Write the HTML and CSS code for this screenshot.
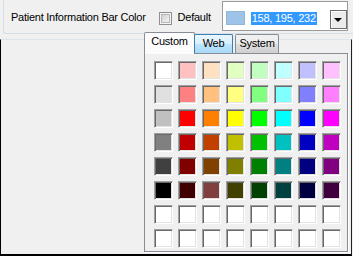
FILE: index.html
```html
<!DOCTYPE html>
<html>
<head>
<meta charset="utf-8">
<link rel="stylesheet" href="styles.css">
</head>
<body>
<div class="window">
  <div class="group">
    <div class="row">
      <span class="label">Patient Information Bar Color</span>
      <span class="check"></span>
      <span class="check-label">Default</span>
      <div class="combo">
        <span class="combo-swatch"></span>
        <span class="combo-text">158, 195, 232</span>
        <span class="combo-button"><span class="arrow"></span></span>
      </div>
    </div>
  </div>
  <div class="panel"></div>

  <div class="popup">
    <div class="tabs">
      <span class="tab active">Custom</span>
      <span class="tab hover">Web</span>
      <span class="tab system">System</span>
    </div>
    <div class="page">
      <div class="grid">
        <span class="sw" style="background:#ffffff"></span>
        <span class="sw" style="background:#ffc0c0"></span>
        <span class="sw" style="background:#ffe0c0"></span>
        <span class="sw" style="background:#e0ffc0"></span>
        <span class="sw" style="background:#c0ffc0"></span>
        <span class="sw" style="background:#c0ffff"></span>
        <span class="sw" style="background:#c0c0ff"></span>
        <span class="sw" style="background:#ffc0ff"></span>

        <span class="sw" style="background:#e0e0e0"></span>
        <span class="sw" style="background:#ff8080"></span>
        <span class="sw" style="background:#ffc080"></span>
        <span class="sw" style="background:#ffff80"></span>
        <span class="sw" style="background:#80ff80"></span>
        <span class="sw" style="background:#80ffff"></span>
        <span class="sw" style="background:#8080ff"></span>
        <span class="sw" style="background:#ff80ff"></span>

        <span class="sw" style="background:#c0c0c0"></span>
        <span class="sw" style="background:#ff0000"></span>
        <span class="sw" style="background:#ff8000"></span>
        <span class="sw" style="background:#ffff00"></span>
        <span class="sw" style="background:#00ff00"></span>
        <span class="sw" style="background:#00ffff"></span>
        <span class="sw" style="background:#0000ff"></span>
        <span class="sw" style="background:#ff00ff"></span>

        <span class="sw" style="background:#808080"></span>
        <span class="sw" style="background:#c00000"></span>
        <span class="sw" style="background:#c04000"></span>
        <span class="sw" style="background:#c0c000"></span>
        <span class="sw" style="background:#00c000"></span>
        <span class="sw" style="background:#00c0c0"></span>
        <span class="sw" style="background:#0000c0"></span>
        <span class="sw" style="background:#c000c0"></span>

        <span class="sw" style="background:#404040"></span>
        <span class="sw" style="background:#800000"></span>
        <span class="sw" style="background:#804000"></span>
        <span class="sw" style="background:#808000"></span>
        <span class="sw" style="background:#008000"></span>
        <span class="sw" style="background:#008080"></span>
        <span class="sw" style="background:#000080"></span>
        <span class="sw" style="background:#800080"></span>

        <span class="sw" style="background:#000000"></span>
        <span class="sw" style="background:#400000"></span>
        <span class="sw" style="background:#804040"></span>
        <span class="sw" style="background:#404000"></span>
        <span class="sw" style="background:#004000"></span>
        <span class="sw" style="background:#004040"></span>
        <span class="sw" style="background:#000040"></span>
        <span class="sw" style="background:#400040"></span>

        <span class="sw"></span><span class="sw"></span><span class="sw"></span><span class="sw"></span>
        <span class="sw"></span><span class="sw"></span><span class="sw"></span><span class="sw"></span>
        <span class="sw"></span><span class="sw"></span><span class="sw"></span><span class="sw"></span>
        <span class="sw"></span><span class="sw"></span><span class="sw"></span><span class="sw"></span>
      </div>
    </div>
  </div>
</div>
</body>
</html>
```

FILE: styles.css
```css
html, body {
  margin: 0;
  padding: 0;
}
body {
  width: 353px;
  height: 256px;
  overflow: hidden;
  background: #f0f0f0;
  font-family: "Liberation Sans", Arial, sans-serif;
  font-size: 11px;
  letter-spacing: -0.25px;
  color: #000;
}
.window {
  position: relative;
  width: 353px;
  height: 256px;
}
.group {
  box-sizing: border-box;
  margin-left: 3px;
  width: 350px;
  height: 34px;
  border-left: 1px solid #d5dfe5;
  border-bottom: 1px solid #d5dfe5;
  border-bottom-left-radius: 3px;
}
.row {
  display: flex;
  align-items: flex-start;
  padding-left: 7px;
}
.label {
  margin-top: 11px;
  line-height: 13px;
  white-space: nowrap;
}
.check {
  box-sizing: border-box;
  width: 13px;
  height: 13px;
  margin-top: 12px;
  margin-left: 13px;
  border: 1px solid #8e8f8f;
  background: linear-gradient(135deg, #c9c9c9 0%, #ececec 70%, #f6f6f6 100%);
  box-shadow: inset 0 0 0 1px #f4f4f4, inset 0 0 0 2px #b8b8b8;
}
.check-label {
  margin-top: 11px;
  margin-left: 6px;
  line-height: 13px;
}
.combo {
  box-sizing: border-box;
  display: flex;
  align-items: flex-start;
  width: 126px;
  height: 30px;
  margin-top: 1px;
  margin-left: 11px;
  border: 1px solid #9a9a9a;
  background: #fff;
}
.combo-swatch {
  box-sizing: border-box;
  width: 19px;
  height: 14px;
  margin-top: 9px;
  margin-left: 3px;
  background: #9ec3e8;
  border: 1px solid #95b6d8;
}
.combo-text {
  margin-top: 10px;
  margin-left: 6px;
  padding: 0 1px;
  line-height: 13px;
  background: #3399ff;
  color: #fff;
}
.combo-button {
  box-sizing: border-box;
  display: flex;
  align-items: center;
  justify-content: center;
  width: 17px;
  height: 19px;
  margin-top: 8px;
  margin-left: auto;
  border: 1px solid #6e6e6e;
  background: #ececec;
  box-shadow: inset 1px 1px 0 #fff;
}
.arrow {
  width: 0;
  height: 0;
  border-left: 4px solid transparent;
  border-right: 4px solid transparent;
  border-top: 4px solid #000;
  margin-top: 1px;
}
.panel {
  box-sizing: border-box;
  margin-top: 5px;
  width: 352px;
  height: 217px;
  border-top: 1px solid #dde5eb;
  border-left: 1px solid #000;
  border-right: 1px solid #202020;
  border-bottom: 2px solid #000;
}

/* drop-down color picker overlay */
.popup {
  position: absolute;
  left: 144px;
  top: 32px;
  width: 204px;
  display: flex;
  flex-direction: column;
}
.tabs {
  display: flex;
  align-items: flex-end;
  height: 21px;
  position: relative;
  z-index: 1;
}
.tab {
  box-sizing: border-box;
  height: 19px;
  padding-top: 2px;
  line-height: 13px;
  text-align: center;
  border: 1px solid #898c95;
  border-bottom: none;
  border-radius: 2px 2px 0 0;
}
.tab.active {
  width: 51px;
  height: 22px;
  margin-bottom: -1px;
  background: #fcfcfc;
}
.tab.hover {
  width: 39px;
  margin-left: -1px;
  border-color: #3c7fb1;
  background: linear-gradient(#eaf6fd 0%, #d9f0fc 50%, #bee6fd 51%, #a7d9f5 100%);
}
.tab.system {
  width: 44px;
  margin-left: 2px;
  background: linear-gradient(#f2f2f2 0%, #ebebeb 50%, #dddddd 51%, #cfcfcf 100%);
}
.page {
  box-sizing: border-box;
  width: 204px;
  height: 199px;
  border: 1px solid #898c95;
  background: #f0f0f0;
  box-shadow: 1px 1px 0 #fff;
  padding: 7px 0 0 9px;
}
.grid {
  display: grid;
  grid-template-columns: repeat(8, 19px);
  grid-auto-rows: 19px;
  gap: 5px;
}
.sw {
  box-sizing: border-box;
  display: block;
  background: #fff;
  border: 1px solid;
  border-color: #a0a0a0 #ffffff #ffffff #a0a0a0;
  box-shadow: inset 1px 1px 0 #696969, inset -1px -1px 0 #e3e3e3;
}
```
